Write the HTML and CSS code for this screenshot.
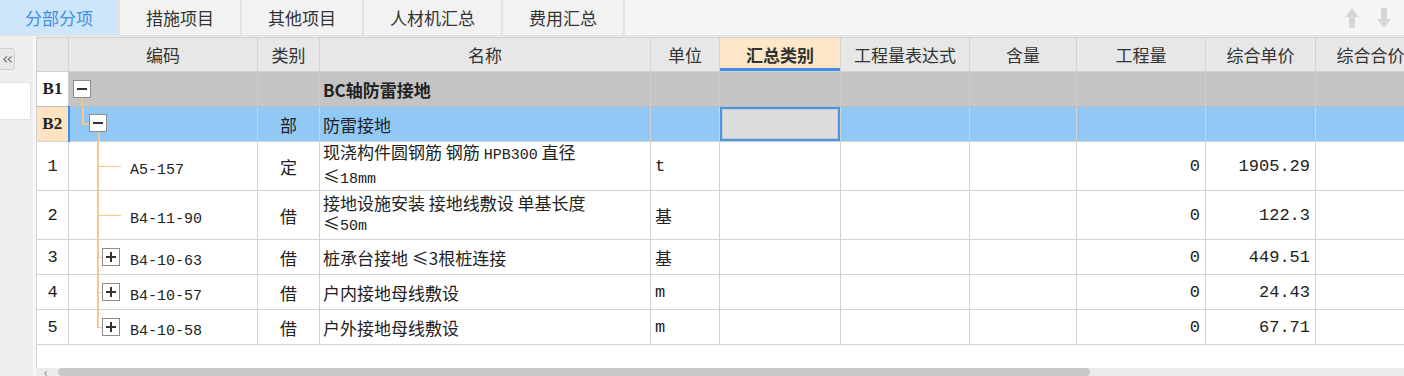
FILE: index.html
```html
<!DOCTYPE html>
<html lang="zh-CN">
<head>
    <meta charset="UTF-8">
    <title>分部分项</title>
    <link rel="stylesheet" href="styles.css">
</head>
<body>

<div class="tabbar">
    <div class="tab active">分部分项</div>
    <div class="tab">措施项目</div>
    <div class="tab">其他项目</div>
    <div class="tab">人材机汇总</div>
    <div class="tab">费用汇总</div>
    <div class="arrows">
        <svg width="16" height="22" viewBox="0 0 16 22"><path d="M8 1 L15 10 L11 10 L11 21 L5 21 L5 10 L1 10 Z" fill="#d6d6d6"/></svg>
        <svg width="16" height="22" viewBox="0 0 16 22"><path d="M8 21 L15 12 L11 12 L11 1 L5 1 L5 12 L1 12 Z" fill="#d6d6d6"/></svg>
    </div>
</div>

<div class="main">
    <div class="side">
        <div class="collapse-btn">&lsaquo;&lsaquo;</div>
        <div class="side-box"></div>
    </div>

    <div class="grid-wrap">
        <div class="grid">
            <table class="sheet">
                <colgroup>
                    <col class="c-hdr"><col class="c-code"><col class="c-type"><col class="c-name"><col class="c-unit">
                    <col class="c-sum"><col class="c-expr"><col class="c-qty1"><col class="c-qty"><col class="c-price"><col class="c-total">
                </colgroup>
                <thead>
                    <tr>
                        <th></th>
                        <th>编码</th>
                        <th>类别</th>
                        <th>名称</th>
                        <th>单位</th>
                        <th class="active">汇总类别</th>
                        <th>工程量表达式</th>
                        <th>含量</th>
                        <th>工程量</th>
                        <th>综合单价</th>
                        <th>综合合价</th>
                    </tr>
                </thead>
                <tbody>
                    <tr class="r-b1">
                        <td class="rh b">B1</td>
                        <td class="code t-b1"><span class="tg minus b1-box"></span></td>
                        <td></td>
                        <td class="name strong">BC轴防雷接地</td>
                        <td></td><td></td><td></td><td></td><td></td><td></td><td></td>
                    </tr>
                    <tr class="r-b2">
                        <td class="rh b">B2</td>
                        <td class="code t-b2"><span class="tg minus b2-box"></span></td>
                        <td class="type">部</td>
                        <td class="name">防雷接地</td>
                        <td></td>
                        <td class="sel"></td>
                        <td></td><td></td><td></td><td></td><td></td>
                    </tr>
                    <tr class="tall">
                        <td class="rh">1</td>
                        <td class="code t-leaf"><span class="mono">A5-157</span></td>
                        <td class="type">定</td>
                        <td class="name">现浇构件圆钢筋 钢筋 <span class="mono">HPB300</span> 直径<br>≤<span class="mono">18mm</span></td>
                        <td class="unit mono">t</td>
                        <td></td><td></td><td></td>
                        <td class="num mono">0</td>
                        <td class="num mono">1905.29</td>
                        <td></td>
                    </tr>
                    <tr class="tall">
                        <td class="rh">2</td>
                        <td class="code t-leaf"><span class="mono">B4-11-90</span></td>
                        <td class="type">借</td>
                        <td class="name">接地设施安装 接地线敷设 单基长度<br>≤<span class="mono">50m</span></td>
                        <td class="unit">基</td>
                        <td></td><td></td><td></td>
                        <td class="num mono">0</td>
                        <td class="num mono">122.3</td>
                        <td></td>
                    </tr>
                    <tr>
                        <td class="rh">3</td>
                        <td class="code t-node"><span class="tg plus"></span><span class="mono">B4-10-63</span></td>
                        <td class="type">借</td>
                        <td class="name">桩承台接地 ≤3根桩连接</td>
                        <td class="unit">基</td>
                        <td></td><td></td><td></td>
                        <td class="num mono">0</td>
                        <td class="num mono">449.51</td>
                        <td></td>
                    </tr>
                    <tr>
                        <td class="rh">4</td>
                        <td class="code t-node"><span class="tg plus"></span><span class="mono">B4-10-57</span></td>
                        <td class="type">借</td>
                        <td class="name">户内接地母线敷设</td>
                        <td class="unit mono">m</td>
                        <td></td><td></td><td></td>
                        <td class="num mono">0</td>
                        <td class="num mono">24.43</td>
                        <td></td>
                    </tr>
                    <tr>
                        <td class="rh">5</td>
                        <td class="code t-last"><span class="tg plus"></span><span class="mono">B4-10-58</span></td>
                        <td class="type">借</td>
                        <td class="name">户外接地母线敷设</td>
                        <td class="unit mono">m</td>
                        <td></td><td></td><td></td>
                        <td class="num mono">0</td>
                        <td class="num mono">67.71</td>
                        <td></td>
                    </tr>
                </tbody>
            </table>
            <div class="filler"></div>
            <div class="hscroll">
                <span class="scroll-arrow">&lsaquo;</span>
                <div class="thumb"></div>
            </div>
        </div>
    </div>
</div>

</body>
</html>
```

FILE: styles.css
```css
* {
    box-sizing: border-box;
}
body {
    margin: 0;
    width: 1404px;
    height: 376px;
    overflow: hidden;
    font-family: "Noto Sans CJK SC", sans-serif;
    color: #333;
    background-color: #f0f0f0;
}

/* tabs */
.tabbar {
    display: flex;
    height: 36px;
    background-color: #f5f5f5;
    border-bottom: 1px solid #e0e0e0;
}
.tab {
    display: flex;
    align-items: center;
    justify-content: center;
    padding: 0 26px;
    font-size: 17px;
    color: #333;
    background-color: #f2f2f2;
    border-right: 2px solid #e2e2e2;
}
.tab.active {
    padding: 0 25px;
    background-color: #cde6fb;
    color: #3f90e0;
}
.arrows {
    margin-left: auto;
    margin-right: 12px;
    display: flex;
    align-items: center;
    gap: 16px;
}

/* left strip + grid */
.main {
    display: flex;
    height: 340px;
}
.side {
    width: 36px;
    flex: none;
    background-color: #efefef;
    border-right: 3px solid #f7f7f7;
    padding-top: 12px;
    overflow: hidden;
}
.collapse-btn {
    width: 21px;
    height: 22px;
    margin-left: -6px;
    border: 1px solid #cfcfcf;
    border-radius: 3px;
    background-color: #e8e8e8;
    color: #777;
    font-family: "DejaVu Sans", sans-serif;
    font-size: 16px;
    line-height: 19px;
    text-align: center;
    padding-left: 4px;
    letter-spacing: -2px;
}
.side-box {
    margin-top: 12px;
    width: 31px;
    height: 38px;
    background-color: #fff;
    border: 1px solid #e2e2e2;
    border-left: none;
}
.grid-wrap {
    flex: 1;
    min-width: 0;
    padding-top: 1px;
    background-color: #ececec;
}
.grid {
    height: 100%;
    display: flex;
    flex-direction: column;
    background-color: #fff;
    overflow: hidden;
}

/* table */
.sheet {
    table-layout: fixed;
    border-collapse: collapse;
    width: 1389px;
    flex: none;
}
.c-hdr { width: 32px; }
.c-code { width: 189px; }
.c-type { width: 62px; }
.c-name { width: 331px; }
.c-unit { width: 69px; }
.c-sum { width: 121px; }
.c-expr { width: 129px; }
.c-qty1 { width: 107px; }
.c-qty { width: 129px; }
.c-price { width: 110px; }
.c-total { width: 110px; }

.sheet th,
.sheet td {
    border: 1px solid #d2d2d2;
    padding: 0;
    white-space: nowrap;
    overflow: hidden;
}
.sheet th {
    height: 34px;
    background-color: #e7e7e7;
    font-size: 17px;
    font-weight: normal;
    color: #333;
    text-align: center;
}
.sheet th.active {
    background-color: #fde7c8;
    font-weight: bold;
    box-shadow: inset 0 -3px 0 #3f8fe8;
}
.sheet td {
    height: 35px;
    font-size: 17px;
    color: #222;
    vertical-align: middle;
}
.sheet tr.tall td {
    height: 49px;
}
.sheet tr.tall td.name {
    line-height: 20px;
}

.r-b1 td {
    background-color: #c4c4c4;
    border-color: #bdbdbd #cbcbcb;
}
.r-b2 td {
    background-color: #91c8f5;
}
.r-b1 td.rh {
    background-color: #fff;
}
.r-b2 td.rh {
    background-color: #fde3c2;
}
.r-b2 td.code {
    border-left: 2px solid #3d8fe6;
}
.r-b2 td.sel {
    background-color: #dcdcdc;
    box-shadow: inset 0 0 0 2px #4597ee, inset 0 0 0 3px #c8c8c8;
}

.rh {
    text-align: center;
    font-family: "Liberation Mono", monospace;
    font-size: 15px;
}
.rh.b {
    font-family: "Liberation Serif", serif;
    font-weight: bold;
    font-size: 17px;
}
.type {
    text-align: center;
}
.name {
    padding-left: 3px !important;
}
.name.strong {
    font-weight: bold;
}
.unit {
    padding-left: 4px !important;
}
.num {
    text-align: right;
    padding-right: 5px !important;
}
.mono {
    font-family: "Liberation Mono", monospace;
    font-size: 15px;
}

/* tree column: connector lines are cell backgrounds */
.code {
    position: relative;
    padding-left: 61px !important;
    background-repeat: no-repeat;
}
.code.t-b1 {
    background-image: linear-gradient(#f8c78b, #f8c78b);
    background-position: 12px 26px;
    background-size: 2px 100%;
}
.code.t-b2 {
    background-image: linear-gradient(#f8c78b, #f8c78b), linear-gradient(#f8c78b, #f8c78b), linear-gradient(#f8c78b, #f8c78b);
    background-position: 12px 0, 12px 16px, 28px 26px;
    background-size: 2px 17px, 8px 2px, 2px 100%;
}
.code.t-leaf {
    background-image: linear-gradient(#f8c78b, #f8c78b), linear-gradient(#f8c78b, #f8c78b);
    background-position: 28px 0, 28px 50%;
    background-size: 2px 100%, 24px 1px;
}
.code.t-node {
    background-image: linear-gradient(#f8c78b, #f8c78b), linear-gradient(#f8c78b, #f8c78b);
    background-position: 28px 0, 28px 50%;
    background-size: 2px 100%, 6px 1px;
}
.code.t-last {
    background-image: linear-gradient(#f8c78b, #f8c78b), linear-gradient(#f8c78b, #f8c78b);
    background-position: 28px 0, 28px 50%;
    background-size: 2px 50%, 6px 1px;
}

.tg {
    position: absolute;
    width: 18px;
    height: 18px;
    border: 1px solid #8c8c8c;
    background-color: #fff;
}
.tg::before,
.tg::after {
    content: "";
    position: absolute;
    background-color: #333;
}
.tg::before {
    left: 3px;
    right: 3px;
    top: 7px;
    height: 2px;
}
.tg.plus::after {
    top: 3px;
    bottom: 3px;
    left: 7px;
    width: 2px;
}
.b1-box {
    left: 4px;
    top: 8px;
}
.b2-box {
    left: 19px;
    top: 7px;
}
.tg.plus {
    left: 33px;
    top: calc(50% - 9px);
}

/* bottom */
.filler {
    flex: 1;
    background-color: #fff;
    border-left: 1px solid #d2d2d2;
}
.hscroll {
    height: 8px;
    flex: none;
    display: flex;
    align-items: flex-start;
    background-color: #ececec;
}
.scroll-arrow {
    width: 22px;
    padding-left: 8px;
    font-size: 12px;
    line-height: 8px;
    color: #777;
}
.thumb {
    width: 1032px;
    height: 8px;
    border-radius: 4px;
    background-color: #c8c8c8;
}
```
